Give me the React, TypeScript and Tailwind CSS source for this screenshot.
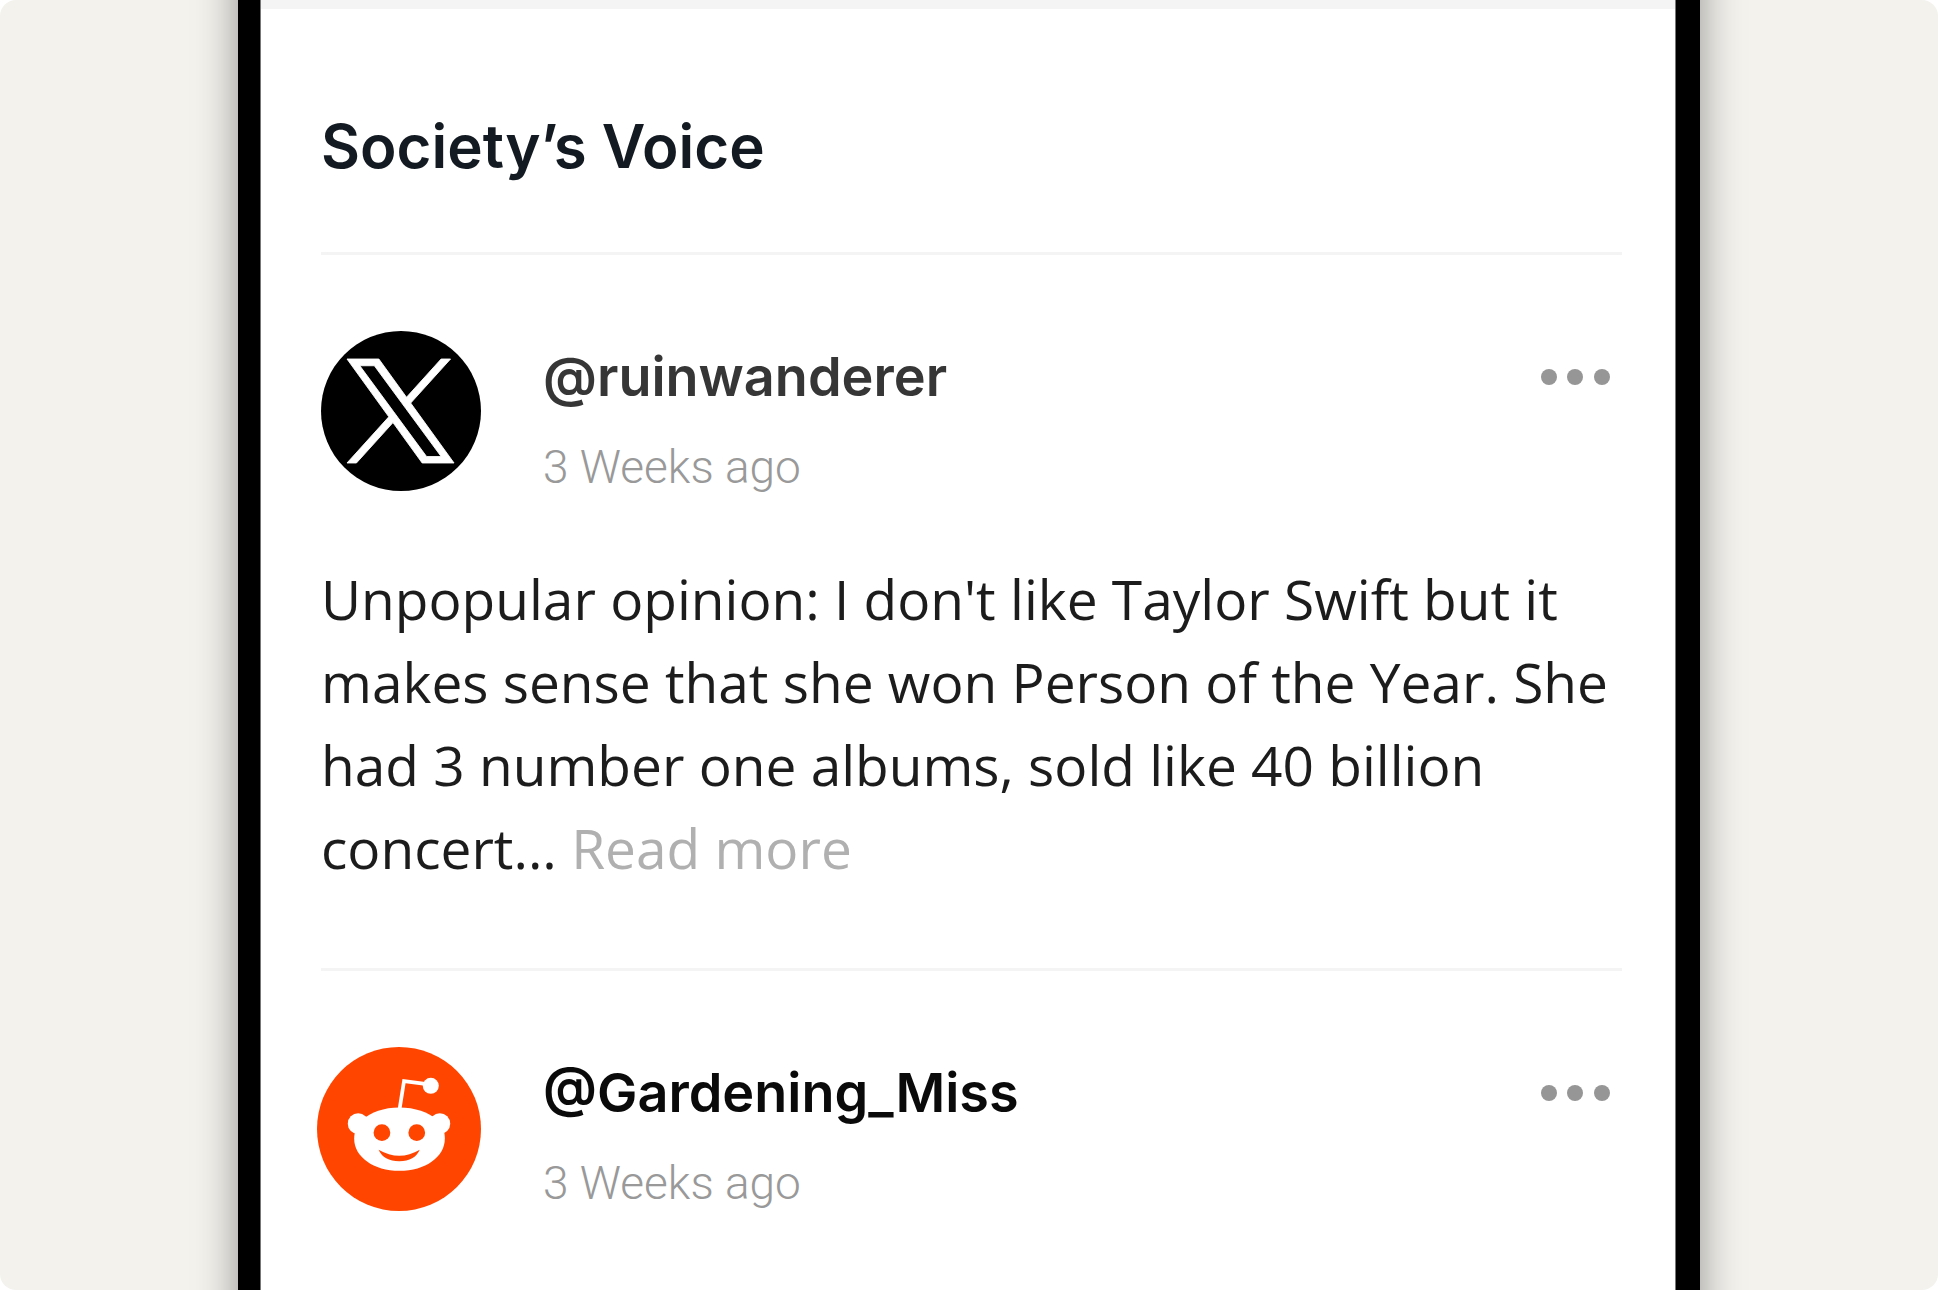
// src/App.tsx

import React from 'react';

interface Post {
  id: number;
  handle: string;
  handleClass: string;
  age: string;
  network: 'x' | 'reddit';
  text?: string;
}

const posts: Post[] = [
  {
    id: 1,
    handle: '@ruinwanderer',
    handleClass: 'text-[#363636]',
    age: '3 Weeks ago',
    network: 'x',
    text: "Unpopular opinion: I don't like Taylor Swift but it makes sense that she won Person of the Year. She had 3 number one albums, sold like 40 billion concert...",
  },
  {
    id: 2,
    handle: '@Gardening_Miss',
    handleClass: 'text-[#0a0a0a]',
    age: '3 Weeks ago',
    network: 'reddit',
  },
];

function XAvatar() {
  return (
    <svg className="size-40" viewBox="0 0 160 160" role="img" aria-label="X">
      <circle cx="80" cy="80" r="80" fill="#000" />
      <path
        transform="translate(26 28) scale(0.0892 0.0848)"
        fill="#fff"
        stroke="#fff"
        strokeWidth="10"
        d="M714.163 519.284L1160.89 0H1055.03L667.137 450.887L357.328 0H0L468.492 681.821L0 1226.37H105.866L515.491 750.218L842.672 1226.37H1200L714.137 519.284H714.163ZM569.165 687.828L521.697 619.934L144.011 79.694H306.615L611.412 515.685L658.88 583.579L1055.08 1150.3H892.476L569.165 687.854V687.828Z"
      />
    </svg>
  );
}

function RedditAvatar() {
  return (
    <svg className="-ml-1 size-41" viewBox="51 50 490 490" role="img" aria-label="Reddit">
      <circle cx="296" cy="295" r="245" fill="#ff4500" />
      {/* Antenna */}
      <path d="M297 240L311 152L380 161" fill="none" stroke="#fff" strokeWidth="11" />
      <circle cx="391" cy="166" r="24" fill="#fff" />
      {/* Ears and face */}
      <circle cx="174" cy="279" r="31" fill="#fff" />
      <circle cx="418" cy="279" r="31" fill="#fff" />
      <path
        d="M297 231C345 231 382 245 412 268C428 286 433 306 433 324C433 378 375 420 297 420C220 420 162 378 162 324C162 306 168 286 184 268C214 245 250 231 297 231Z"
        fill="#fff"
      />
      <circle cx="245" cy="306" r="25" fill="#ff4500" />
      <circle cx="349" cy="306" r="25" fill="#ff4500" />
      <path d="M235 357Q297 393 358 357Q343 391 297 391Q250 391 235 357Z" fill="#ff4500" />
    </svg>
  );
}

function PostItem({post}: {post: Post}) {
  return (
    <article className="border-t-3 border-[#f4f4f4] pt-[76px] pb-[79px]">
      <div className="flex items-start">
        {post.network === 'x' ? <XAvatar /> : <RedditAvatar />}

        <div className="mt-2.5 ml-[62px] flex flex-1 flex-col gap-[18px] leading-[72px]">
          <h2 className={`text-[54px] font-semibold ${post.handleClass}`}>{post.handle}</h2>
          <p className="font-['Roboto',sans-serif] text-[46px] font-light text-[#999]">
            {post.age}
          </p>
        </div>

        <button type="button" className="mt-8 mr-2 p-1" aria-label="More options">
          <svg className="h-5 w-[70px]" viewBox="0 0 70 20" fill="#969696">
            <circle cx="9" cy="10" r="8" />
            <circle cx="35" cy="10" r="8" />
            <circle cx="62" cy="10" r="8" />
          </svg>
        </button>
      </div>

      {post.text && (
        <p className="mt-[54px] font-['Open_Sans',sans-serif] text-[55px] leading-[83px] text-[#1c1c1c]">
          {post.text}{' '}
          <a href="#" className="text-[#b0b0b0]">
            Read more
          </a>
        </p>
      )}
    </article>
  );
}

function App() {
  return (
    <div className="bg-white">
      <div className="flex min-h-screen justify-center overflow-hidden rounded-2xl bg-[#f3f2ed] px-6">
        {/* Device frame, runs past both ends of the page */}
        <div className="-my-16 w-full max-w-[1462px] border-r-24 border-l-22 border-black bg-white py-16 shadow-[0_0_40px_rgba(0,0,0,0.4)]">
          <main className="h-full max-h-screen overflow-hidden border-x border-[#777] font-['Inter',sans-serif]">
            <div className="h-[9px] bg-[#f4f4f4]" />
            <div className="pr-[53px] pl-[60px]">
              <h1 className="pt-[101px] pb-[70px] text-[60px] leading-[72px] font-semibold text-[#141a22]">
                Society’s Voice
              </h1>
              {posts.map((post) => (
                <PostItem key={post.id} post={post} />
              ))}
            </div>
          </main>
        </div>
      </div>
    </div>
  );
}

export default App;
